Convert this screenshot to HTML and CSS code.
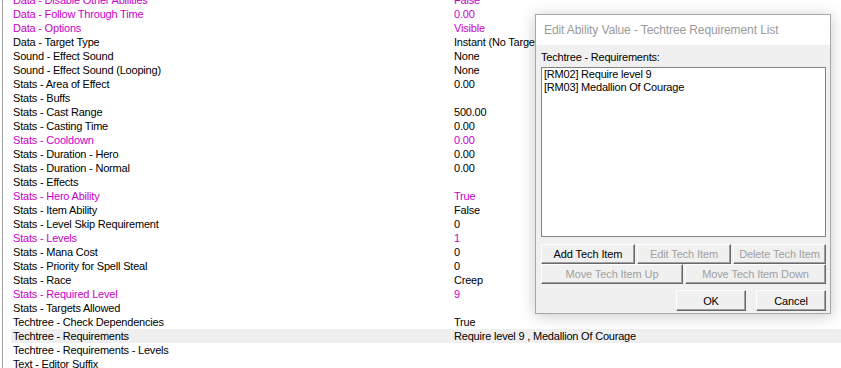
FILE: index.html
```html
<!DOCTYPE html>
<html lang="en">

<head>
    <meta charset="UTF-8">
    <link rel="stylesheet" href="styles.css">
    <title>Object Editor</title>
</head>

<body>
    <div class="fields">
        <div class="row changed"><span>Data - Disable Other Abilities</span><span>False</span></div>
        <div class="row changed"><span>Data - Follow Through Time</span><span>0.00</span></div>
        <div class="row changed"><span>Data - Options</span><span>Visible</span></div>
        <div class="row"><span>Data - Target Type</span><span>Instant (No Target)</span></div>
        <div class="row"><span>Sound - Effect Sound</span><span>None</span></div>
        <div class="row"><span>Sound - Effect Sound (Looping)</span><span>None</span></div>
        <div class="row"><span>Stats - Area of Effect</span><span>0.00</span></div>
        <div class="row"><span>Stats - Buffs</span><span></span></div>
        <div class="row"><span>Stats - Cast Range</span><span>500.00</span></div>
        <div class="row"><span>Stats - Casting Time</span><span>0.00</span></div>
        <div class="row changed"><span>Stats - Cooldown</span><span>0.00</span></div>
        <div class="row"><span>Stats - Duration - Hero</span><span>0.00</span></div>
        <div class="row"><span>Stats - Duration - Normal</span><span>0.00</span></div>
        <div class="row"><span>Stats - Effects</span><span></span></div>
        <div class="row changed"><span>Stats - Hero Ability</span><span>True</span></div>
        <div class="row"><span>Stats - Item Ability</span><span>False</span></div>
        <div class="row"><span>Stats - Level Skip Requirement</span><span>0</span></div>
        <div class="row changed"><span>Stats - Levels</span><span>1</span></div>
        <div class="row"><span>Stats - Mana Cost</span><span>0</span></div>
        <div class="row"><span>Stats - Priority for Spell Steal</span><span>0</span></div>
        <div class="row"><span>Stats - Race</span><span>Creep</span></div>
        <div class="row changed"><span>Stats - Required Level</span><span>9</span></div>
        <div class="row"><span>Stats - Targets Allowed</span><span></span></div>
        <div class="row"><span>Techtree - Check Dependencies</span><span>True</span></div>
        <div class="row selected"><span>Techtree - Requirements</span><span>Require level 9 , Medallion Of Courage</span></div>
        <div class="row"><span>Techtree - Requirements - Levels</span><span></span></div>
        <div class="row"><span>Text - Editor Suffix</span><span></span></div>
    </div>

    <div class="dialog">
        <div class="titlebar">Edit Ability Value - Techtree Requirement List</div>
        <div class="dialog-body">
            <div class="label">Techtree - Requirements:</div>
            <div class="listbox">
                <div>[RM02] Require level 9</div>
                <div>[RM03] Medallion Of Courage</div>
            </div>
            <div class="btn-row three">
                <button class="btn">Add Tech Item</button>
                <button class="btn" disabled>Edit Tech Item</button>
                <button class="btn" disabled>Delete Tech Item</button>
            </div>
            <div class="btn-row two">
                <button class="btn" disabled>Move Tech Item Up</button>
                <button class="btn" disabled>Move Tech Item Down</button>
            </div>
            <div class="actions">
                <button class="btn wide">OK</button>
                <button class="btn wide">Cancel</button>
            </div>
        </div>
    </div>
</body>

</html>
```

FILE: styles.css
```css
:root {
    --font: 'Liberation Sans', Arial, sans-serif;
    --changed: #c800c8;
    --face: #f0f0f0;
    --disabled: #a0a0a0;
}

html,
body {
    overflow: hidden;
}

body {
    margin: 0;
    background-color: #fff;
    color: #000;
    font-family: var(--font);
    font-size: 11px;
    letter-spacing: -0.2px;
    height: 368px;
}

.fields {
    margin: -7px 0 0 2px;
    border-left: 1px solid #a0a0a0;
    height: 375px;
    overflow: hidden;
}

.row {
    display: grid;
    grid-template-columns: 441px 1fr;
    height: 14px;
    line-height: 14px;
    margin-left: 8px;
    padding-left: 2px;
    white-space: nowrap;
}

.row.changed {
    color: var(--changed);
}

.row.selected {
    background-color: #efefef;
}

.dialog {
    position: absolute;
    left: 535px;
    top: 14px;
    width: 294px;
    height: 298px;
    border: 1px solid #a8a8a8;
    background-color: var(--face);
    box-shadow: 0 2px 14px rgba(0, 0, 0, 0.22);
    display: flex;
    flex-direction: column;
}

.titlebar {
    height: 30px;
    line-height: 30px;
    background-color: #fff;
    color: #9a9a9a;
    padding-left: 8px;
    font-size: 12px;
    letter-spacing: -0.1px;
}

.dialog-body {
    padding: 5px 4px 0 5px;
}

.label {
    height: 17px;
    line-height: 15px;
}

.listbox {
    height: 168px;
    border: 1px solid #828282;
    background-color: #fff;
    padding: 0 2px;
    line-height: 13px;
}

.btn-row {
    display: grid;
    gap: 2px;
}

.btn-row.three {
    grid-template-columns: 94px 94px 1fr;
    margin-top: 7px;
}

.btn-row.two {
    grid-template-columns: 142px 1fr;
}

.btn {
    height: 20px;
    padding: 0;
    font-family: var(--font);
    font-size: 11px;
    letter-spacing: -0.1px;
    color: #000;
    background-color: var(--face);
    border: 1px solid;
    border-color: #fff #696969 #696969 #fff;
    box-shadow: inset -1px -1px 0 #a0a0a0;
}

.btn:disabled {
    color: var(--disabled);
}

.actions {
    display: flex;
    justify-content: flex-end;
    gap: 10px;
    margin-top: 6px;
}

.btn.wide {
    width: 70px;
    height: 21px;
}
```
